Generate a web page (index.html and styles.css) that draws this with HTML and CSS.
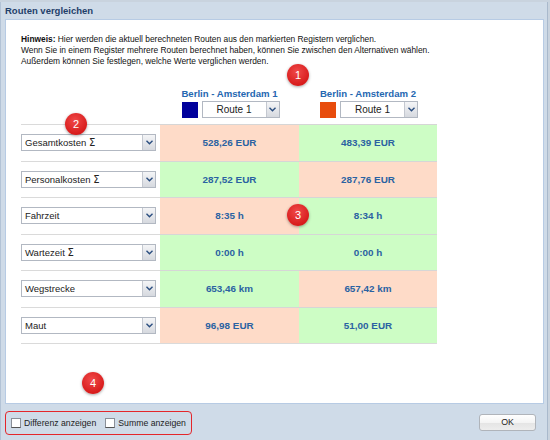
FILE: index.html
```html
<!DOCTYPE html>
<html lang="de">
<head>
<meta charset="utf-8">
<link rel="stylesheet" href="styles.css">
</head>
<body>
<div class="dialog">
  <div class="titlebar">Routen vergleichen</div>
  <div class="panel">
    <div class="hint">
      <p><b>Hinweis:</b> Hier werden die aktuell berechneten Routen aus den markierten Registern verglichen.</p>
      <p>Wenn Sie in einem Register mehrere Routen berechnet haben, können Sie zwischen den Alternativen wählen.</p>
      <p>Außerdem können Sie festlegen, welche Werte verglichen werden.</p>
    </div>
    <div class="grid">
      <div class="head-empty"></div>
      <div class="colhead">
        <div class="coltitle">Berlin - Amsterdam 1</div>
        <div class="colctrl">
          <span class="swatch blue"></span>
          <div class="select route"><span class="val">Route 1</span><span class="arrow"><svg width="7" height="5" viewBox="0 0 7 5"><path d="M0.5 0.8 L3.5 3.8 L6.5 0.8" fill="none" stroke="#2a4d7f" stroke-width="1.4"/></svg></span></div>
        </div>
      </div>
      <div class="colhead">
        <div class="coltitle">Berlin - Amsterdam 2</div>
        <div class="colctrl">
          <span class="swatch orange"></span>
          <div class="select route"><span class="val">Route 1</span><span class="arrow"><svg width="7" height="5" viewBox="0 0 7 5"><path d="M0.5 0.8 L3.5 3.8 L6.5 0.8" fill="none" stroke="#2a4d7f" stroke-width="1.4"/></svg></span></div>
        </div>
      </div>

      <div class="label"><div class="select"><span class="val">Gesamtkosten <span class="sig">&Sigma;</span></span><span class="arrow"><svg width="7" height="5" viewBox="0 0 7 5"><path d="M0.5 0.8 L3.5 3.8 L6.5 0.8" fill="none" stroke="#2a4d7f" stroke-width="1.4"/></svg></span></div></div>
      <div class="cell bad">528,26 EUR</div>
      <div class="cell good">483,39 EUR</div>

      <div class="label"><div class="select"><span class="val">Personalkosten <span class="sig">&Sigma;</span></span><span class="arrow"><svg width="7" height="5" viewBox="0 0 7 5"><path d="M0.5 0.8 L3.5 3.8 L6.5 0.8" fill="none" stroke="#2a4d7f" stroke-width="1.4"/></svg></span></div></div>
      <div class="cell good">287,52 EUR</div>
      <div class="cell bad">287,76 EUR</div>

      <div class="label"><div class="select"><span class="val">Fahrzeit</span><span class="arrow"><svg width="7" height="5" viewBox="0 0 7 5"><path d="M0.5 0.8 L3.5 3.8 L6.5 0.8" fill="none" stroke="#2a4d7f" stroke-width="1.4"/></svg></span></div></div>
      <div class="cell bad">8:35 h</div>
      <div class="cell good">8:34 h</div>

      <div class="label"><div class="select"><span class="val">Wartezeit <span class="sig">&Sigma;</span></span><span class="arrow"><svg width="7" height="5" viewBox="0 0 7 5"><path d="M0.5 0.8 L3.5 3.8 L6.5 0.8" fill="none" stroke="#2a4d7f" stroke-width="1.4"/></svg></span></div></div>
      <div class="cell good">0:00 h</div>
      <div class="cell good">0:00 h</div>

      <div class="label"><div class="select"><span class="val">Wegstrecke</span><span class="arrow"><svg width="7" height="5" viewBox="0 0 7 5"><path d="M0.5 0.8 L3.5 3.8 L6.5 0.8" fill="none" stroke="#2a4d7f" stroke-width="1.4"/></svg></span></div></div>
      <div class="cell good">653,46 km</div>
      <div class="cell bad">657,42 km</div>

      <div class="label last"><div class="select"><span class="val">Maut</span><span class="arrow"><svg width="7" height="5" viewBox="0 0 7 5"><path d="M0.5 0.8 L3.5 3.8 L6.5 0.8" fill="none" stroke="#2a4d7f" stroke-width="1.4"/></svg></span></div></div>
      <div class="cell bad last">96,98 EUR</div>
      <div class="cell good last">51,00 EUR</div>
    </div>
  </div>
  <div class="footer">
    <div class="checks">
      <label class="check"><span class="box"></span>Differenz anzeigen</label>
      <label class="check"><span class="box"></span>Summe anzeigen</label>
    </div>
    <button class="ok">OK</button>
  </div>
  <span class="badge b1">1</span>
  <span class="badge b2">2</span>
  <span class="badge b3">3</span>
  <span class="badge b4">4</span>
</div>
</body>
</html>
```

FILE: styles.css
```css
* { box-sizing: border-box; }
html, body { margin: 0; padding: 0; }
body {
  width: 550px;
  height: 440px;
  overflow: hidden;
  font-family: "Liberation Sans", Arial, sans-serif;
  background: #c9d3de;
}
.dialog {
  position: relative;
  width: 548px;
  height: 440px;
  margin-top: 2px;
  background: #cfdbe8;
  border-left: 1px solid #b3c3d6;
  border-right: 1px solid #a9b9cc;
  display: flex;
  flex-direction: column;
}
.titlebar {
  height: 17px;
  padding: 3px 0 0 4px;
  font-size: 9.5px;
  font-weight: bold;
  color: #1f3f6a;
}
.panel {
  height: 385px;
  margin: 0 3px 0 4px;
  background: #fff;
  border: 1px solid #b7cbe4;
  padding: 14px 0 0 15px;
}
.hint { font-size: 8.4px; color: #111; line-height: 11px; }
.hint p { margin: 0; }
.grid {
  margin-top: 21px;
  display: grid;
  grid-template-columns: 139px 139px 138px;
}
.colhead {
  display: flex;
  flex-direction: column;
  align-items: center;
  padding-bottom: 6px;
}
.coltitle {
  font-size: 9.6px;
  font-weight: bold;
  color: #2567b1;
  height: 12px;
  margin-bottom: 1px;
}
.colctrl { display: flex; align-items: center; gap: 4px; margin-left: 2px; }
.swatch { width: 16px; height: 16px; display: block; }
.swatch.blue { background: #00009c; }
.swatch.orange { background: #e84c0c; }
.select {
  display: flex;
  height: 17px;
  border: 1px solid #b2b8c2;
  background: #fff;
  font-size: 9.5px;
  color: #222;
}
.select .val { flex: 1; padding-left: 3px; line-height: 15px; white-space: nowrap; }
.sig { font-family: "DejaVu Sans", sans-serif; font-size: 10px; }
.select.route { width: 78px; }
.select.route .val { text-align: center; padding-left: 0; font-size: 10px; }
.arrow {
  width: 13px;
  border-left: 1px solid #c4c8d0;
  background: linear-gradient(#f4f5f7, #d6d9df);
  display: flex;
  align-items: center;
  justify-content: center;
}
.label {
  height: 36.5px;
  border-top: 1px solid #dadada;
  display: flex;
  align-items: center;
  padding-right: 4px;
}
.label .select { width: 135px; }
.label.last, .cell.last { border-bottom: 1px solid #dadada; height: 37.5px; }
.cell {
  height: 36.5px;
  border-top: 1px solid #d6d6d6;
  display: flex;
  align-items: center;
  justify-content: center;
  font-size: 9.9px;
  font-weight: bold;
  color: #2a62a2;
}
.cell.good { background: #cdfdc5; }
.cell.bad { background: #fedbc8; }
.footer {
  flex: 1;
  display: flex;
  align-items: center;
  justify-content: space-between;
  padding: 0 11px 0 4px;
}
.checks {
  display: flex;
  align-items: center;
  gap: 9px;
  width: 187px;
  height: 24px;
  border: 1.5px solid #e4262b;
  border-radius: 4px;
  padding-left: 5px;
  margin-top: -1px;
}
.check {
  display: flex;
  align-items: center;
  gap: 3px;
  font-size: 8.7px;
  color: #222;
}
.box {
  width: 10px;
  height: 10px;
  background: #fff;
  border: 1px solid #8a8f98;
  border-bottom-color: #555;
}
.ok {
  width: 57px;
  height: 17px;
  margin-top: -2px;
  font-family: inherit;
  font-size: 8.8px;
  color: #222;
  border: 1px solid #b0b4ba;
  border-radius: 3px;
  background: linear-gradient(#ffffff 0%, #f4f4f4 50%, #e4e4e4 51%, #ededed 100%);
  padding: 0;
}
.badge {
  position: absolute;
  width: 22px;
  height: 22px;
  border-radius: 50%;
  background: radial-gradient(circle at 45% 35%, #f04a4a, #d81c1c 70%, #c01414);
  color: #fff;
  font-size: 11px;
  line-height: 22px;
  text-align: center;
  box-shadow: 0 1px 3px rgba(0,0,0,0.35);
}
.b1 { left: 286px; top: 62px; }
.b2 { left: 64px; top: 111px; }
.b3 { left: 286px; top: 202px; }
.b4 { left: 81px; top: 370px; }
```
